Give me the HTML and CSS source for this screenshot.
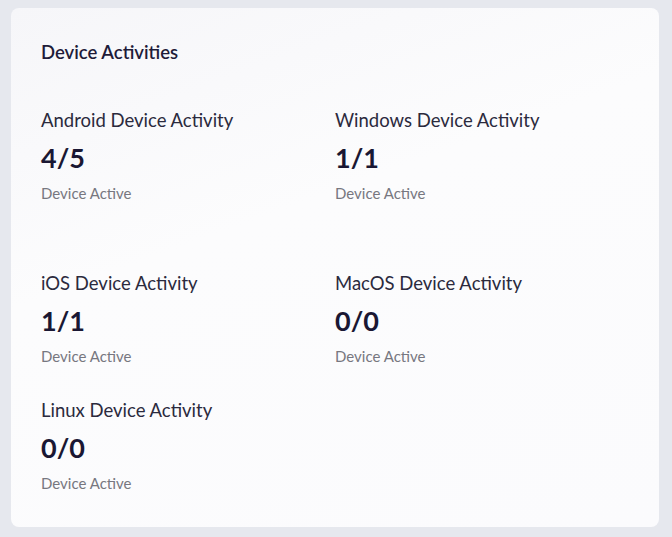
FILE: index.html
```html
<!DOCTYPE html>
<html lang="en">
<head>
    <meta charset="UTF-8">
    <meta name="viewport" content="width=device-width, initial-scale=1.0">
    <title>Device Activities</title>
    <link rel="stylesheet" href="styles.css">
</head>
<body>
    <div class="card">
        <h2 class="card-title">Device Activities</h2>
        <div class="stats">
            <div class="stat">
                <div class="stat-label">Android Device Activity</div>
                <div class="stat-value">4/5</div>
                <div class="stat-sub">Device Active</div>
            </div>
            <div class="stat">
                <div class="stat-label">Windows Device Activity</div>
                <div class="stat-value">1/1</div>
                <div class="stat-sub">Device Active</div>
            </div>
            <div class="stat">
                <div class="stat-label">iOS Device Activity</div>
                <div class="stat-value">1/1</div>
                <div class="stat-sub">Device Active</div>
            </div>
            <div class="stat">
                <div class="stat-label">MacOS Device Activity</div>
                <div class="stat-value">0/0</div>
                <div class="stat-sub">Device Active</div>
            </div>
            <div class="stat">
                <div class="stat-label">Linux Device Activity</div>
                <div class="stat-value">0/0</div>
                <div class="stat-sub">Device Active</div>
            </div>
        </div>
    </div>
</body>
</html>
```
FILE: styles.css
```css
*{
    padding: 0;
    margin: 0;
    box-sizing: border-box;
}

body{
    background: #e6e8ee;
    font-family: Lato, "Liberation Sans", sans-serif;
    padding: 8px 13px 10px 11px;
}

.card{
    background: linear-gradient(160deg, #f6f6f9 0%, #fcfcfd 40%, #fbfbfd 100%);
    border-radius: 8px;
    padding: 32px 30px 34px;
    height: 519px;
}

.card-title{
    font-size: 18.5px;
    font-weight: 600;
    line-height: 24px;
    color: #1e1b39;
    margin-bottom: 44px;
}

.stats{
    display: grid;
    grid-template-columns: 294px 294px;
    row-gap: 32px;
}

.stat:nth-child(-n+2){
    margin-bottom: 36px;
}

.stat-label{
    font-size: 18.5px;
    line-height: 24px;
    color: #2b2a3d;
    margin-bottom: 9px;
}

.stat-value{
    font-size: 27px;
    font-weight: 700;
    line-height: 34px;
    color: #1a1733;
    margin-bottom: 8px;
}

.stat-sub{
    font-size: 15px;
    line-height: 20px;
    color: #777780;
}
```
